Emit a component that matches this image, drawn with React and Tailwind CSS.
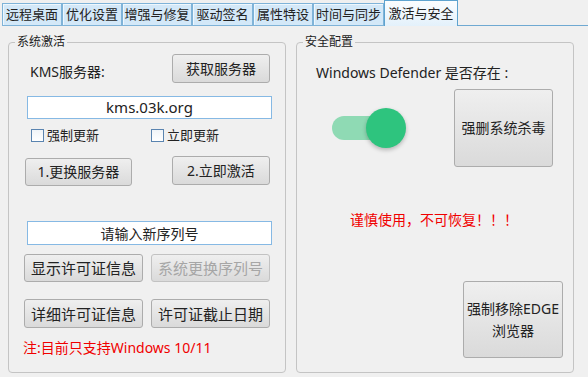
import React, { useState } from 'react';

const font = "font-['Noto_Sans','Noto_Sans_CJK_SC',sans-serif]";

const tabs = [
  { label: '远程桌面', w: 'w-[60px]' },
  { label: '优化设置', w: 'w-[60px]' },
  { label: '增强与修复', w: 'w-[70px]' },
  { label: '驱动签名', w: 'w-[61px]' },
  { label: '属性特设', w: 'w-[60px]' },
  { label: '时间与同步', w: 'w-[71px]' },
  { label: '激活与安全', w: 'w-[74px]', active: true },
];

const Btn = ({ children, className = '', disabled }) => (
  <button
    className={`rounded-[3px] border bg-gradient-to-b from-[#efefef] to-[#dadada] leading-[18px] ${
      disabled ? 'border-[#c2c2c2] text-[#a6a6a6]' : 'border-[#acacac] text-[#222]'
    } ${className}`}
  >
    {children}
  </button>
);

const Check = ({ label, className = '' }) => (
  <label className={`flex items-center gap-[3px] text-[13px] leading-[15px] text-[#222] ${className}`}>
    <span className="h-[13px] w-[13px] border border-[#5a84b0] bg-gradient-to-b from-[#f0f4f8] to-[#ffffff]" />
    {label}
  </label>
);

const App = () => {
  const [tab] = useState('激活与安全');

  return (
    <div className={`h-[377px] w-[588px] overflow-hidden bg-[#f0f0f0] text-[#222] ${font}`}>
      {/* Tab strip */}
      <div className="flex h-[26px] items-end pl-[2px]">
        {tabs.map((t) =>
          t.label === tab ? (
            <div
              key={t.label}
              className={`${t.w} flex h-[26px] items-center justify-center border border-b-0 border-[#5ea3cf] bg-gradient-to-b from-[#fbfdff] to-[#e3f1fb] text-[13px]`}
            >
              {t.label}
            </div>
          ) : (
            <div
              key={t.label}
              className={`${t.w} flex h-[23px] items-center justify-center border border-[#7fb3d8] bg-[#d3e8f8] text-[13px] shadow-[inset_1px_1px_0_#eef7fd]`}
            >
              {t.label}
            </div>
          )
        )}
        <div className="h-[1px] flex-1 bg-[#6fa9d2]" />
      </div>

      <div className="flex gap-[10px] pl-[8px] pt-[8px]">
        {/* 系统激活 */}
        <fieldset className="h-[339px] w-[278px] rounded-[4px] border border-[#c4c4c4]">
          <legend className="ml-[6px] px-[2px] text-[12px] leading-[16px]">系统激活</legend>

          <div className="mt-[4px] flex items-center">
            <span className="ml-[21px] mt-[6px] text-[14px] leading-[18px]">KMS服务器:</span>
            <Btn className="ml-auto mr-[15px] h-[29px] w-[98px] text-[14px]">获取服务器</Btn>
          </div>

          <div className="ml-[18px] mt-[13px] flex h-[23px] w-[245px] items-center justify-center border border-[#86b9e4] bg-white text-[15px]">
            kms.03k.org
          </div>

          <div className="mt-[9px] flex">
            <Check label="强制更新" className="ml-[22px]" />
            <Check label="立即更新" className="ml-[52px]" />
          </div>

          <div className="mt-[13px] flex items-start">
            <Btn className="ml-[16px] mt-[2px] h-[28px] w-[107px] text-[14px]">1.更换服务器</Btn>
            <Btn className="ml-[40px] h-[29px] w-[98px] text-[14px]">2.立即激活</Btn>
          </div>

          <div className="ml-[18px] mt-[35px] flex h-[24px] w-[245px] items-center justify-center border border-[#86b9e4] bg-white text-[14px]">
            请输入新序列号
          </div>

          <div className="ml-[15px] mt-[9px] flex gap-[8px]">
            <Btn className="h-[28px] w-[119px] text-[15px]">显示许可证信息</Btn>
            <Btn disabled className="h-[28px] w-[119px] text-[15px]">系统更换序列号</Btn>
          </div>

          <div className="ml-[15px] mt-[17px] flex gap-[8px]">
            <Btn className="h-[29px] w-[119px] text-[15px]">详细许可证信息</Btn>
            <Btn className="h-[29px] w-[119px] text-[15px]">许可证截止日期</Btn>
          </div>

          <p className="ml-[14px] mt-[11px] text-[14px] leading-[18px] text-[#f00000]">注:目前只支持Windows 10/11</p>
        </fieldset>

        {/* 安全配置 */}
        <fieldset className="h-[339px] w-[278px] rounded-[4px] border border-[#c4c4c4]">
          <legend className="ml-[6px] px-[2px] text-[12px] leading-[16px]">安全配置</legend>

          <p className="ml-[19px] mt-[14px] text-[14px] leading-[18px]">Windows Defender 是否存在 :</p>

          <div className="mt-[7px] flex items-center">
            <div className="relative ml-[35px] h-[40px] w-[74px]">
              <div className="absolute left-0 top-[8px] h-[24px] w-[60px] rounded-full bg-[#8fdab4]" />
              <div className="absolute right-0 top-0 h-[40px] w-[40px] rounded-full bg-[#2ec47e] shadow-[0_2px_4px_rgba(0,0,0,0.25)]" />
            </div>
            <Btn className="ml-[48px] h-[78px] w-[99px] text-[14px]">强删系统杀毒</Btn>
          </div>

          <p className="ml-[53px] mt-[44px] text-[14px] leading-[18px] text-[#f00000]">谨慎使用，不可恢复！！！</p>

          <Btn className="ml-[166px] mt-[52px] h-[77px] w-[100px] text-[14px] leading-[22px]">
            强制移除EDGE
            <br />
            浏览器
          </Btn>
        </fieldset>
      </div>
    </div>
  );
};

export default App;
